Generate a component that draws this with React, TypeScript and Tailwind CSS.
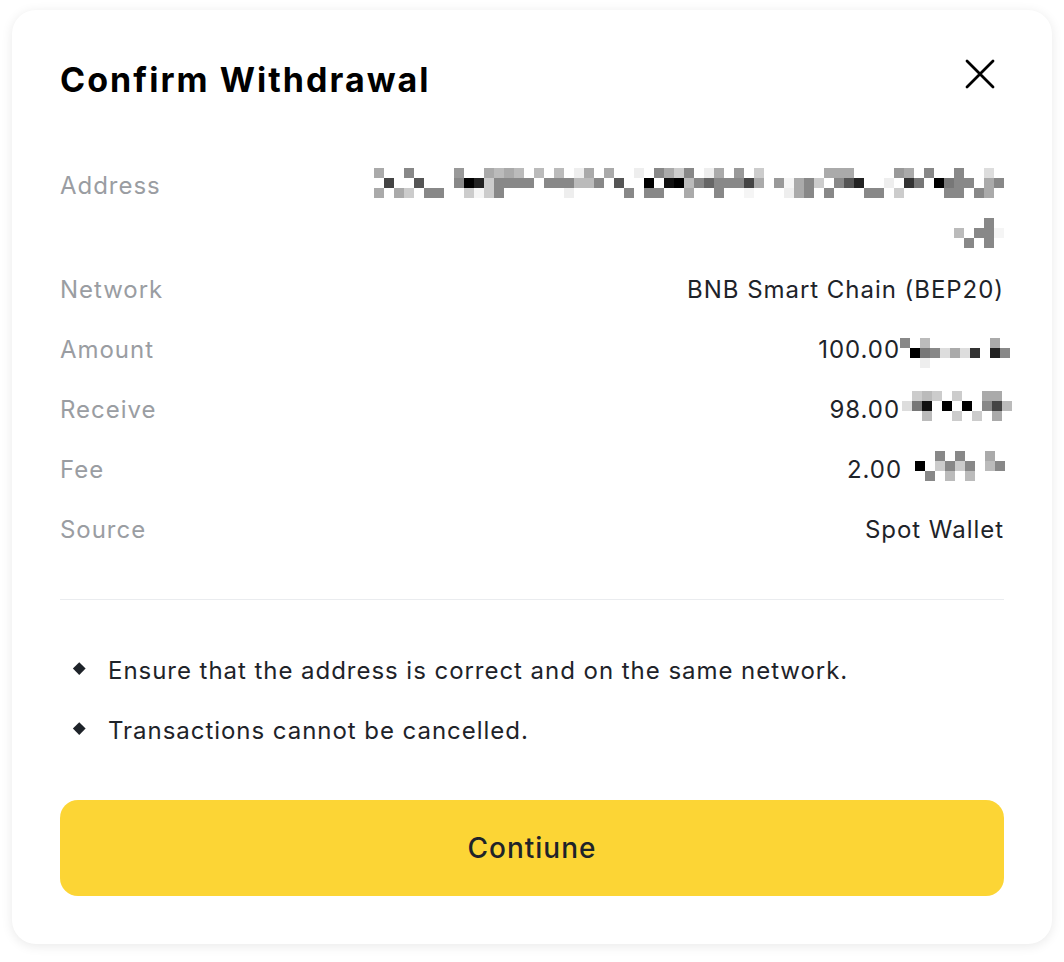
import React from "react";

// pixelated blur blocks, one char per 10px cell: "." empty, hex digit = grey level
type Rows = string[];

const ADDRESS_LINE_1: Rows = [
  "a..8....9." + ".abab.b.b." + "ea.a..e.8a" + "c8.ea.9.c." + ".....aaa.." + "..9a.8..8." + ".d.",
  ".4..5...80" + "2c8888.888" + "bb8.5..0.1" + "0b868884a." + "9fa8c.852." + ".e.37.0788" + ".a8",
  "a.ac.88..c" + "fc8......e" + ".....8.88." + ".a..8..f.." + ".ea8.8...8" + "8.c....88." + "8a.",
];
const ADDRESS_LINE_2: Rows = ["...8.", "b.88f", ".8.8."];
const AMOUNT_TAIL: Rows = ["8.b......a.", ".078dad3.28", "..e........"];
const RECEIVE_TAIL: Rows = [".cbc.c..aa.", "d71.0.0.84b", "..b..c.c.a."];
const FEE_TAIL: Rows = ["..8.8..a.", "0.c8c8.b8", ".8.b.b..."];

function shade(c: string) {
  return c === "f" ? "#f5f5f5" : `#${c}${c}${c}`;
}

function Mosaic({ rows, className }: { rows: Rows; className?: string }) {
  const w = rows[0].length * 10;
  const h = rows.length * 10;
  return (
    <svg
      width={w}
      height={h}
      viewBox={`0 0 ${w} ${h}`}
      shapeRendering="crispEdges"
      className={className}
    >
      {rows.flatMap((row, y) =>
        row.split("").map((c, x) =>
          c === "." ? null : (
            <rect key={`${x}-${y}`} x={x * 10} y={y * 10} width={10} height={10} fill={shade(c)} />
          )
        )
      )}
    </svg>
  );
}

function Row({ label, children }: { label: string; children: React.ReactNode }) {
  return (
    <div className="flex items-start justify-between">
      <span className="text-[24px] leading-9 tracking-[0.04em] text-[#9a9da2]">{label}</span>
      <div className="flex items-start text-[24px] leading-9 tracking-[0.04em] text-[#1e2329]">
        {children}
      </div>
    </div>
  );
}

function Bullet({ children }: { children: React.ReactNode }) {
  return (
    <div className="flex items-start">
      <span className="w-12 shrink-0">
        <span className="ml-[15px] mt-[11px] block h-[8.5px] w-[8.5px] rotate-45 bg-[#1e2329]" />
      </span>
      <span className="text-[24px] leading-9 tracking-[0.04em] text-[#1e2329]">{children}</span>
    </div>
  );
}

export default function App() {
  return (
    <div
      className="min-h-screen bg-white px-3 pt-[10px] pb-[18px]"
      style={{ fontFamily: "Inter, 'Noto Sans', sans-serif" }}
    >
      <div className="rounded-3xl bg-white px-12 pt-[50px] pb-12 shadow-[0_2px_12px_rgba(0,0,0,0.09)]">
        <div className="flex h-10 items-start justify-between">
          <h1 className="text-[34px] font-bold leading-10 tracking-[0.06em] text-black">
            Confirm Withdrawal
          </h1>
          <button className="-mt-[10px] flex h-12 w-12 items-center justify-center text-black">
            <svg width="30" height="30" viewBox="0 0 30 30" fill="none" stroke="currentColor" strokeWidth="2.8" strokeLinecap="round">
              <path d="M2 2 28 28M28 2 2 28" />
            </svg>
          </button>
        </div>

        <div className="mt-[68px] flex flex-col gap-6">
          <Row label="Address">
            <div className="flex flex-col items-end gap-5">
              <Mosaic rows={ADDRESS_LINE_1} />
              <Mosaic rows={ADDRESS_LINE_2} />
            </div>
          </Row>
          <Row label="Network">BNB Smart Chain (BEP20)</Row>
          <Row label="Amount">
            <span>100.00</span>
            <Mosaic rows={AMOUNT_TAIL} className="mt-[6px] -mr-[6px]" />
          </Row>
          <Row label="Receive">
            <span>98.00</span>
            <Mosaic rows={RECEIVE_TAIL} className="-mt-px ml-[2px] -mr-[8px]" />
          </Row>
          <Row label="Fee">
            <span>2.00</span>
            <Mosaic rows={FEE_TAIL} className="-mt-px ml-[13px] -mr-px" />
          </Row>
          <Row label="Source">Spot Wallet</Row>
        </div>

        <div className="mt-[51px] h-px bg-[#eaecef]" />

        <div className="mt-[53px] flex flex-col gap-6">
          <Bullet>Ensure that the address is correct and on the same network.</Bullet>
          <Bullet>Transactions cannot be cancelled.</Bullet>
        </div>

        <button className="mt-[51px] flex h-24 w-full items-center justify-center rounded-[18px] bg-[#fcd535] text-[28px] font-medium tracking-[0.035em] text-[#1e2329]">
          Contiune
        </button>
      </div>
    </div>
  );
}
